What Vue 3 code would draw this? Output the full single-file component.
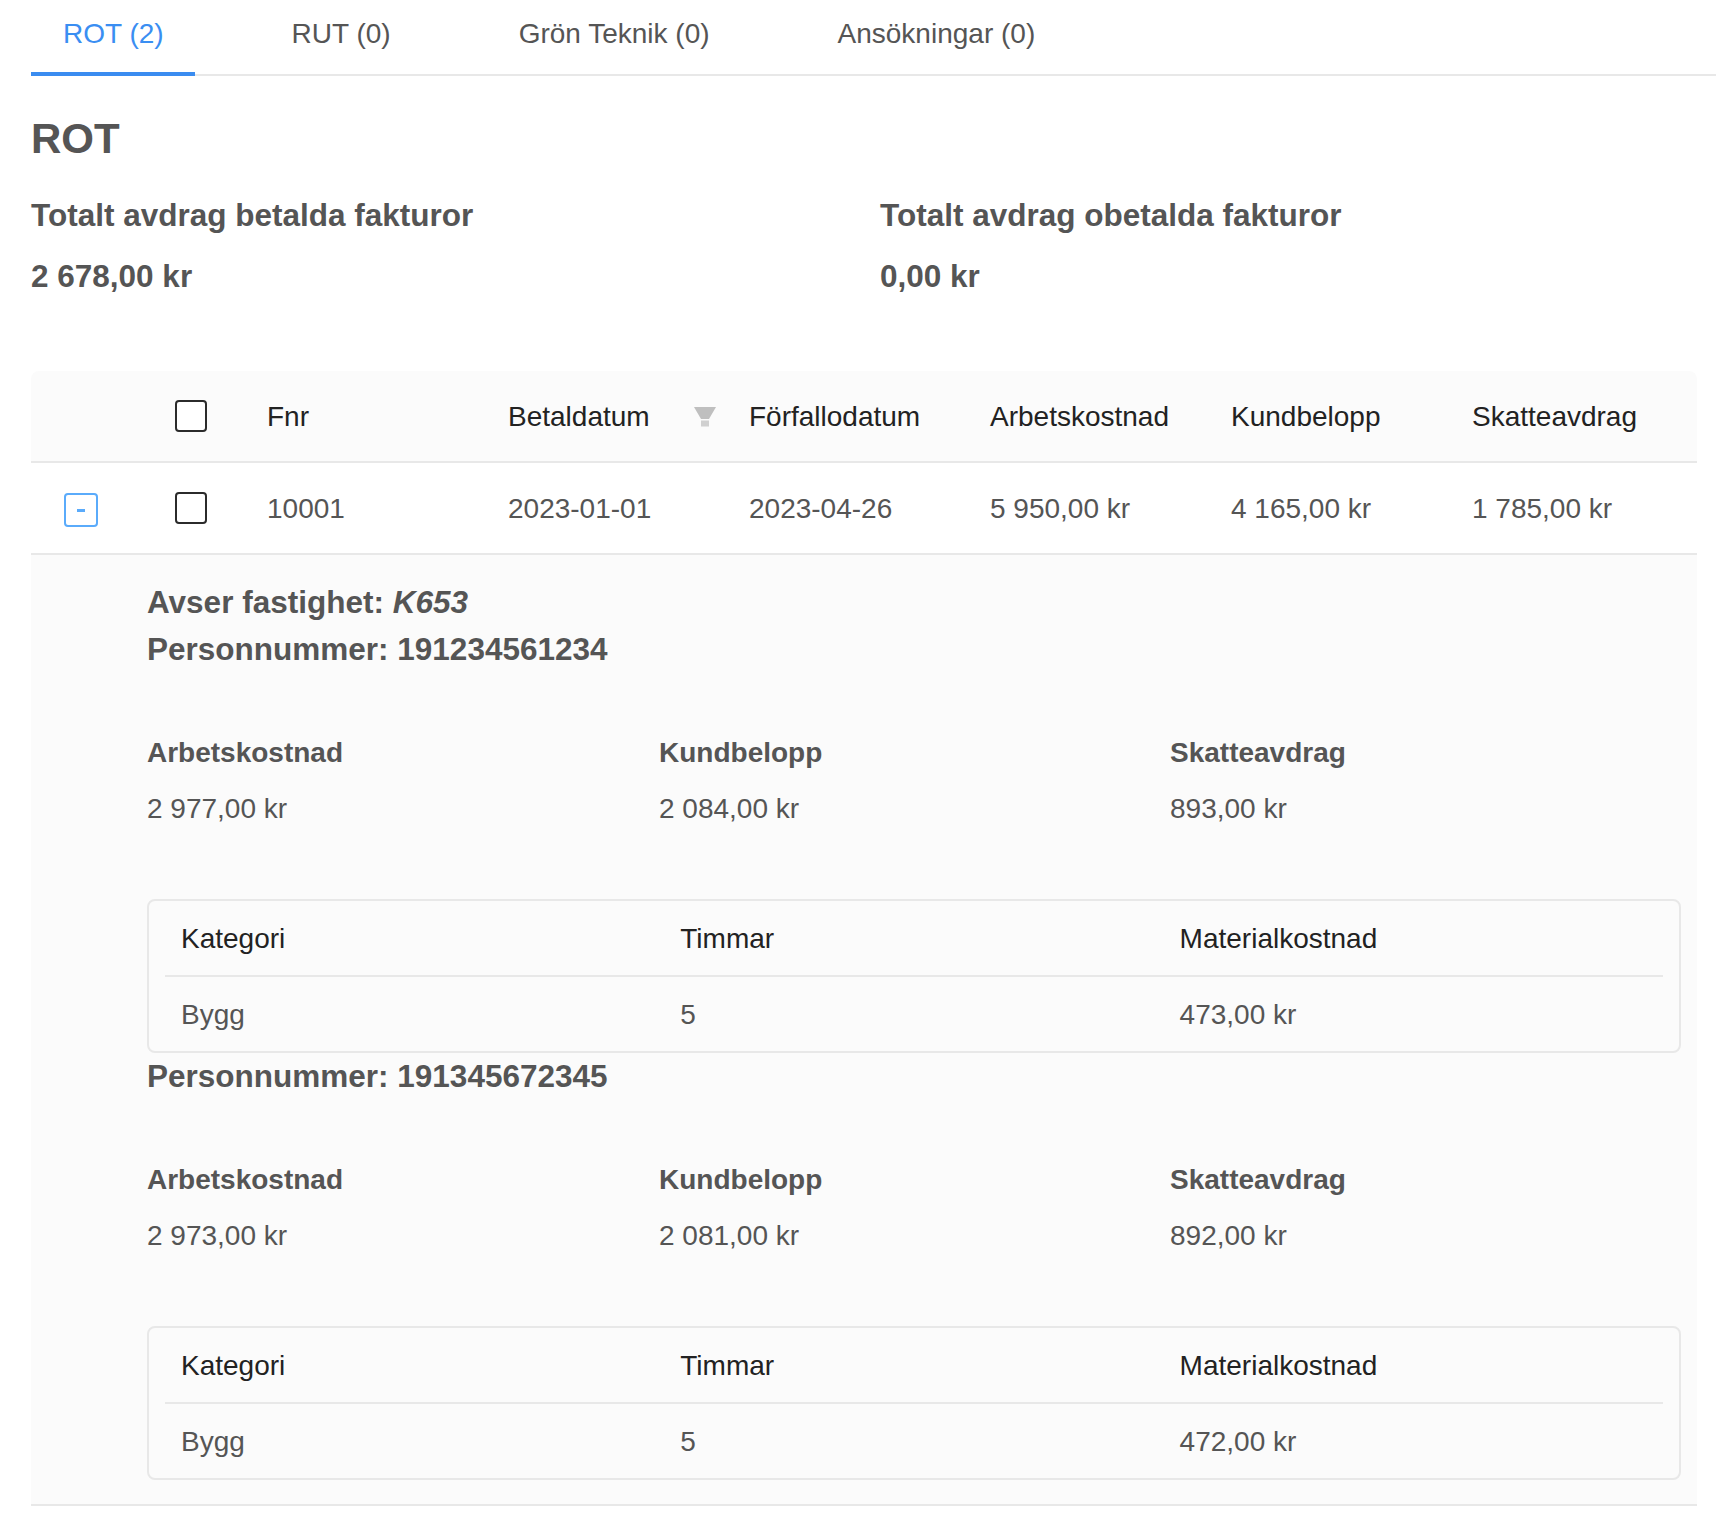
<script setup>
const tabs = [
  { label: 'ROT (2)', active: true },
  { label: 'RUT (0)' },
  { label: 'Grön Teknik (0)' },
  { label: 'Ansökningar (0)' },
]
const columns = ['Förfallodatum', 'Arbetskostnad', 'Kundbelopp', 'Skatteavdrag']
const row = ['10001', '2023-01-01', '2023-04-26', '5 950,00 kr', '4 165,00 kr', '1 785,00 kr']
const people = [
  { id: '191234561234', work: '2 977,00 kr', customer: '2 084,00 kr', tax: '893,00 kr', hours: '5', material: '473,00 kr' },
  { id: '191345672345', work: '2 973,00 kr', customer: '2 081,00 kr', tax: '892,00 kr', hours: '5', material: '472,00 kr' },
]
</script>

<template>
  <div class="page">
    <nav class="tabs">
      <div v-for="t in tabs" :key="t.label" class="tab" :class="{ active: t.active }">{{ t.label }}</div>
    </nav>

    <h2 class="title">ROT</h2>

    <div class="totals">
      <div>
        <div class="total-label">Totalt avdrag betalda fakturor</div>
        <div class="total-value">2 678,00 kr</div>
      </div>
      <div>
        <div class="total-label">Totalt avdrag obetalda fakturor</div>
        <div class="total-value">0,00 kr</div>
      </div>
    </div>

    <div class="table">
      <div class="grid head">
        <div></div>
        <div class="check-cell"><span class="check"></span></div>
        <div class="cell">Fnr</div>
        <div class="cell filter-cell">
          <span>Betaldatum</span>
          <svg class="funnel" width="22" height="20" viewBox="0 0 22 20">
            <path d="M0 0H22L15 12H7Z" fill="#bfbfbf" />
            <rect x="7" y="13.5" width="8" height="6" fill="#d0d0d0" />
          </svg>
        </div>
        <div v-for="c in columns" :key="c" class="cell">{{ c }}</div>
      </div>

      <div class="grid body">
        <div class="expand-cell">
          <span class="expand"><span class="minus"></span></span>
        </div>
        <div class="check-cell"><span class="check"></span></div>
        <div v-for="v in row" :key="v" class="cell">{{ v }}</div>
      </div>

      <div class="expanded">
        <div class="line">Avser fastighet: <em>K653</em></div>
        <section v-for="p in people" :key="p.id">
          <div class="line">Personnummer: {{ p.id }}</div>
          <div class="stats">
            <div>
              <div class="stat-label">Arbetskostnad</div>
              <div class="stat-value">{{ p.work }}</div>
            </div>
            <div>
              <div class="stat-label">Kundbelopp</div>
              <div class="stat-value">{{ p.customer }}</div>
            </div>
            <div>
              <div class="stat-label">Skatteavdrag</div>
              <div class="stat-value">{{ p.tax }}</div>
            </div>
          </div>
          <div class="box">
            <div class="box-row box-head">
              <div>Kategori</div>
              <div>Timmar</div>
              <div>Materialkostnad</div>
            </div>
            <div class="box-row box-body">
              <div>Bygg</div>
              <div>{{ p.hours }}</div>
              <div>{{ p.material }}</div>
            </div>
          </div>
        </section>
      </div>
    </div>
  </div>
</template>

<style scoped>
.page {
  width: 1716px;
  height: 1518px;
  box-sizing: border-box;
  padding: 0 19px 0 31px;
  background: #fff;
  font-family: "Liberation Sans", Arial, sans-serif;
  font-size: 28px;
  line-height: 44px;
  color: #555;
  overflow: hidden;
}
.tabs {
  display: flex;
  gap: 64px;
  height: 76px;
  box-sizing: border-box;
  border-bottom: 2px solid #e8e8e8;
  margin-right: -19px;
}
.tab {
  height: 76px;
  box-sizing: border-box;
  padding: 12px 32px 0;
  color: #555;
}
.tab.active {
  color: #3a8ef2;
  border-bottom: 4px solid #3a8cf0;
  padding-right: 31px;
  margin-right: 1px;
}
.title {
  margin: 38px 0 0;
  font-size: 42px;
  line-height: 50px;
  font-weight: 700;
  color: #555;
}
.totals {
  display: grid;
  grid-template-columns: 849px 1fr;
  margin-top: 29px;
  height: 178px;
  font-weight: 700;
  font-size: 31.5px;
}
.total-value {
  margin-top: 17px;
}
.table {
  width: 1666px;
}
.grid {
  display: grid;
  grid-template-columns: 112px 93px repeat(5, 241px) 256px;
  align-items: center;
  height: 92px;
  box-sizing: border-box;
  border-bottom: 2px solid #e8e8e8;
}
.head {
  background: #fbfbfb;
  color: #222;
  border-radius: 8px 8px 0 0;
}
.cell {
  padding: 2px 0 0 31px;
  display: flex;
  align-items: center;
}
.check-cell {
  padding-left: 32px;
  display: flex;
  align-items: center;
}
.filter-cell {
  justify-content: space-between;
  padding-right: 2px;
}
.check {
  display: block;
  width: 32px;
  height: 32px;
  box-sizing: border-box;
  background: #fff;
  border: 2px solid #2b2b2b;
  border-radius: 4px;
}
.expand-cell {
  padding: 4px 0 0 33px;
  display: flex;
  align-items: center;
}
.expand {
  width: 34px;
  height: 34px;
  box-sizing: border-box;
  border: 2px solid #5aabfb;
  border-radius: 4px;
  background: #fff;
  display: flex;
  align-items: center;
  justify-content: center;
}
.minus {
  display: block;
  width: 8px;
  height: 3px;
  background: #5aabfb;
}
.expanded {
  background: #fbfbfb;
  border-bottom: 2px solid #e8e8e8;
  padding: 24px 16px 25px 116px;
  height: 951px;
  box-sizing: border-box;
}
.line {
  font-size: 31.5px;
  line-height: 47px;
  font-weight: 700;
}
.stats {
  display: grid;
  grid-template-columns: 512px 511px 511px;
  margin-top: 58px;
  height: 168px;
}
.stat-label {
  font-weight: 700;
}
.stat-value {
  margin-top: 12px;
}
.box {
  width: 1534px;
  height: 154px;
  box-sizing: border-box;
  border: 2px solid #e8e8e8;
  border-radius: 8px;
  padding: 0 16px;
}
.box-row {
  display: grid;
  grid-template-columns: repeat(3, 499.3px);
  align-items: center;
}
.box-row > div {
  padding-left: 16px;
}
.box-head {
  height: 76px;
  padding-top: 2px;
  box-sizing: border-box;
  border-bottom: 2px solid #e8e8e8;
  color: #222;
}
.box-body {
  height: 74px;
  padding-top: 2px;
  box-sizing: border-box;
}
</style>
